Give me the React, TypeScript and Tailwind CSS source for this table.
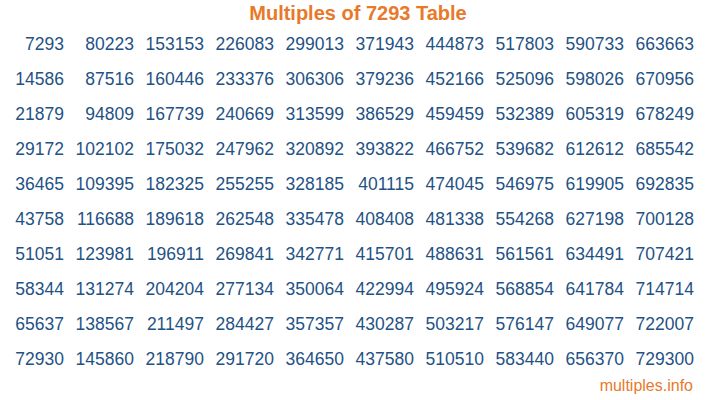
const BASE = 7293;

const rows = Array.from({ length: 10 }, (_, r) =>
  Array.from({ length: 10 }, (_, c) => BASE * (c * 10 + r + 1))
);

export default function App() {
  return (
    <div
      className="w-[716px] h-[400px] bg-white overflow-hidden"
      style={{ fontFamily: '"Liberation Sans", Arial, sans-serif' }}
    >
      <h1 className="h-[27px] pt-[1px] text-center text-[20px] leading-[24px] font-bold text-[#e8792a]">
        Multiples of {BASE} Table
      </h1>
      <div className="w-[700px] grid grid-cols-10">
        {rows.map((row, r) =>
          row.map((n, c) => (
            <div
              key={`${r}-${c}`}
              className="h-[35px] flex items-center justify-end pr-[6px] text-[17.5px] text-[#1f5285]"
            >
              {n}
            </div>
          ))
        )}
      </div>
      <div className="w-[700px] pr-[7px] pt-[1px] text-right text-[16px] leading-[16px] text-[#e8792a]">
        multiples.info
      </div>
    </div>
  );
}
